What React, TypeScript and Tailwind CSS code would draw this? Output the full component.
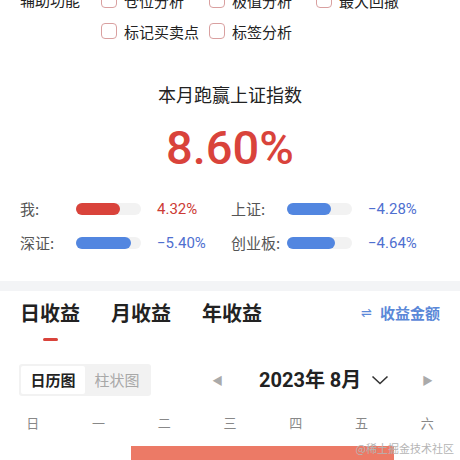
import { type ReactElement } from "react";

const cjk = "font-['Noto_Sans_CJK_SC','Noto_Sans',sans-serif]";

type Compare = { label: string; fill: number; value: string; up: boolean };

const rows: Compare[][] = [
  [
    { label: "我:", fill: 44, value: "4.32%", up: true },
    { label: "上证:", fill: 44, value: "-4.28%", up: false },
  ],
  [
    { label: "深证:", fill: 55, value: "-5.40%", up: false },
    { label: "创业板:", fill: 48, value: "-4.64%", up: false },
  ],
];

const weekdays = ["日", "一", "二", "三", "四", "五", "六"];

function Checkbox({ text }: { text: string }): ReactElement {
  return (
    <label className="flex items-center gap-[7px]">
      <span className="h-4 w-4 rounded-[4px] border border-[#d9a0a0] bg-white" />
      <span className="text-[15px] leading-none text-[#222]">{text}</span>
    </label>
  );
}

function CompareItem({ item }: { item: Compare }): ReactElement {
  return (
    <div className="flex items-center">
      <span className="w-[56px] text-[15px] text-[#555]">{item.label}</span>
      <div className="h-3 w-[65px] rounded-full bg-[#f2f2f2]">
        <div
          className={`h-3 rounded-full ${item.up ? "bg-[#d9433b]" : "bg-[#5286e0]"}`}
          style={{ width: item.fill }}
        />
      </div>
      <span
        className={`ml-4 font-['Roboto',sans-serif] text-[15px] ${
          item.up ? "text-[#cc3b36]" : "text-[#4f6fd0]"
        }`}
      >
        {item.value.replace("-", "−")}
      </span>
    </div>
  );
}

export default function App(): ReactElement {
  return (
    <div className={`relative h-[460px] w-[460px] overflow-hidden bg-white ${cjk}`}>
      <section className="-mt-[15px] flex pl-5">
        <span className="w-[81px] pt-[7px] text-[15px] leading-none text-[#222]">辅助功能</span>
        <div className="grid grid-cols-[108px_107px_107px] gap-y-[15px] pt-[7px]">
          <Checkbox text="仓位分析" />
          <Checkbox text="极值分析" />
          <Checkbox text="最大回撤" />
          <Checkbox text="标记买卖点" />
          <Checkbox text="标签分析" />
        </div>
      </section>

      <section className="mt-[43px] flex flex-col items-center">
        <h2 className="text-[18px] leading-6 text-[#222]">本月跑赢上证指数</h2>
        <p className="mt-[14px] font-['Roboto',sans-serif] text-[47px] font-medium leading-[56px] text-[#d9433b]">
          8.60%
        </p>
      </section>

      <section className="mt-[22px] grid gap-y-[11px] pl-5">
        {rows.map((row, i) => (
          <div className="grid grid-cols-[211px_1fr]" key={i}>
            {row.map((item) => (
              <CompareItem item={item} key={item.label} />
            ))}
          </div>
        ))}
      </section>

      <div className="mt-[27px] h-[10px] bg-[#f3f4f6]" />

      <section className="flex items-start px-5 pt-[7px]">
        <div className="flex gap-[31px]">
          {["日收益", "月收益", "年收益"].map((t, i) => (
            <div className="flex flex-col items-center" key={t}>
              <span className="text-[20px] font-bold leading-[30px] text-[#222]">{t}</span>
              <span
                className={`mt-[10px] h-[3px] w-[15px] rounded-full ${i === 0 ? "bg-[#d9433b]" : "bg-transparent"}`}
              />
            </div>
          ))}
        </div>
        <div className="ml-auto flex items-center gap-[8px] pt-[2px] text-[15px] font-semibold leading-[26px] text-[#5b88d8]">
          <span className="font-['DejaVu_Sans',sans-serif] text-[13px] font-normal">⇌</span>
          收益金额
        </div>
      </section>

      <section className="mt-[23px] flex items-center px-[19px]">
        <div className="flex h-[32px] w-[132px] items-center rounded-[3px] bg-[#f2f2f2] p-[2px]">
          <span className="flex h-full w-[64px] items-center justify-center rounded-[2px] bg-white text-[15px] font-bold text-[#222]">
            日历图
          </span>
          <span className="flex-1 text-center text-[15px] text-[#a8a8a8]">柱状图</span>
        </div>
        <span className="ml-[61px] text-[11px] text-[#aaa]">◀</span>
        <span className="ml-[36px] font-['Roboto','Noto_Sans_CJK_SC',sans-serif] text-[20px] font-bold text-[#222]">
          2023年 8月
        </span>
        <svg className="ml-[10px]" width="18" height="10" viewBox="0 0 18 10" fill="none">
          <path d="M1.5 1.5 9 8.5 16.5 1.5" stroke="#333" strokeWidth="1.6" />
        </svg>
        <span className="ml-auto mr-[8px] text-[11px] text-[#aaa]">▶</span>
      </section>

      <section className="mt-[17px] grid grid-cols-7 text-center text-[13px] text-[#888]">
        {weekdays.map((d) => (
          <span key={d}>{d}</span>
        ))}
      </section>

      <section className="mt-[13px] grid grid-cols-7">
        <div className="col-span-4 col-start-3 h-[20px] bg-[#ec7a66]" />
      </section>

      <span className="absolute bottom-[4px] right-[6px] text-[11px] text-[#b5b5b5]">@稀土掘金技术社区</span>
    </div>
  );
}
